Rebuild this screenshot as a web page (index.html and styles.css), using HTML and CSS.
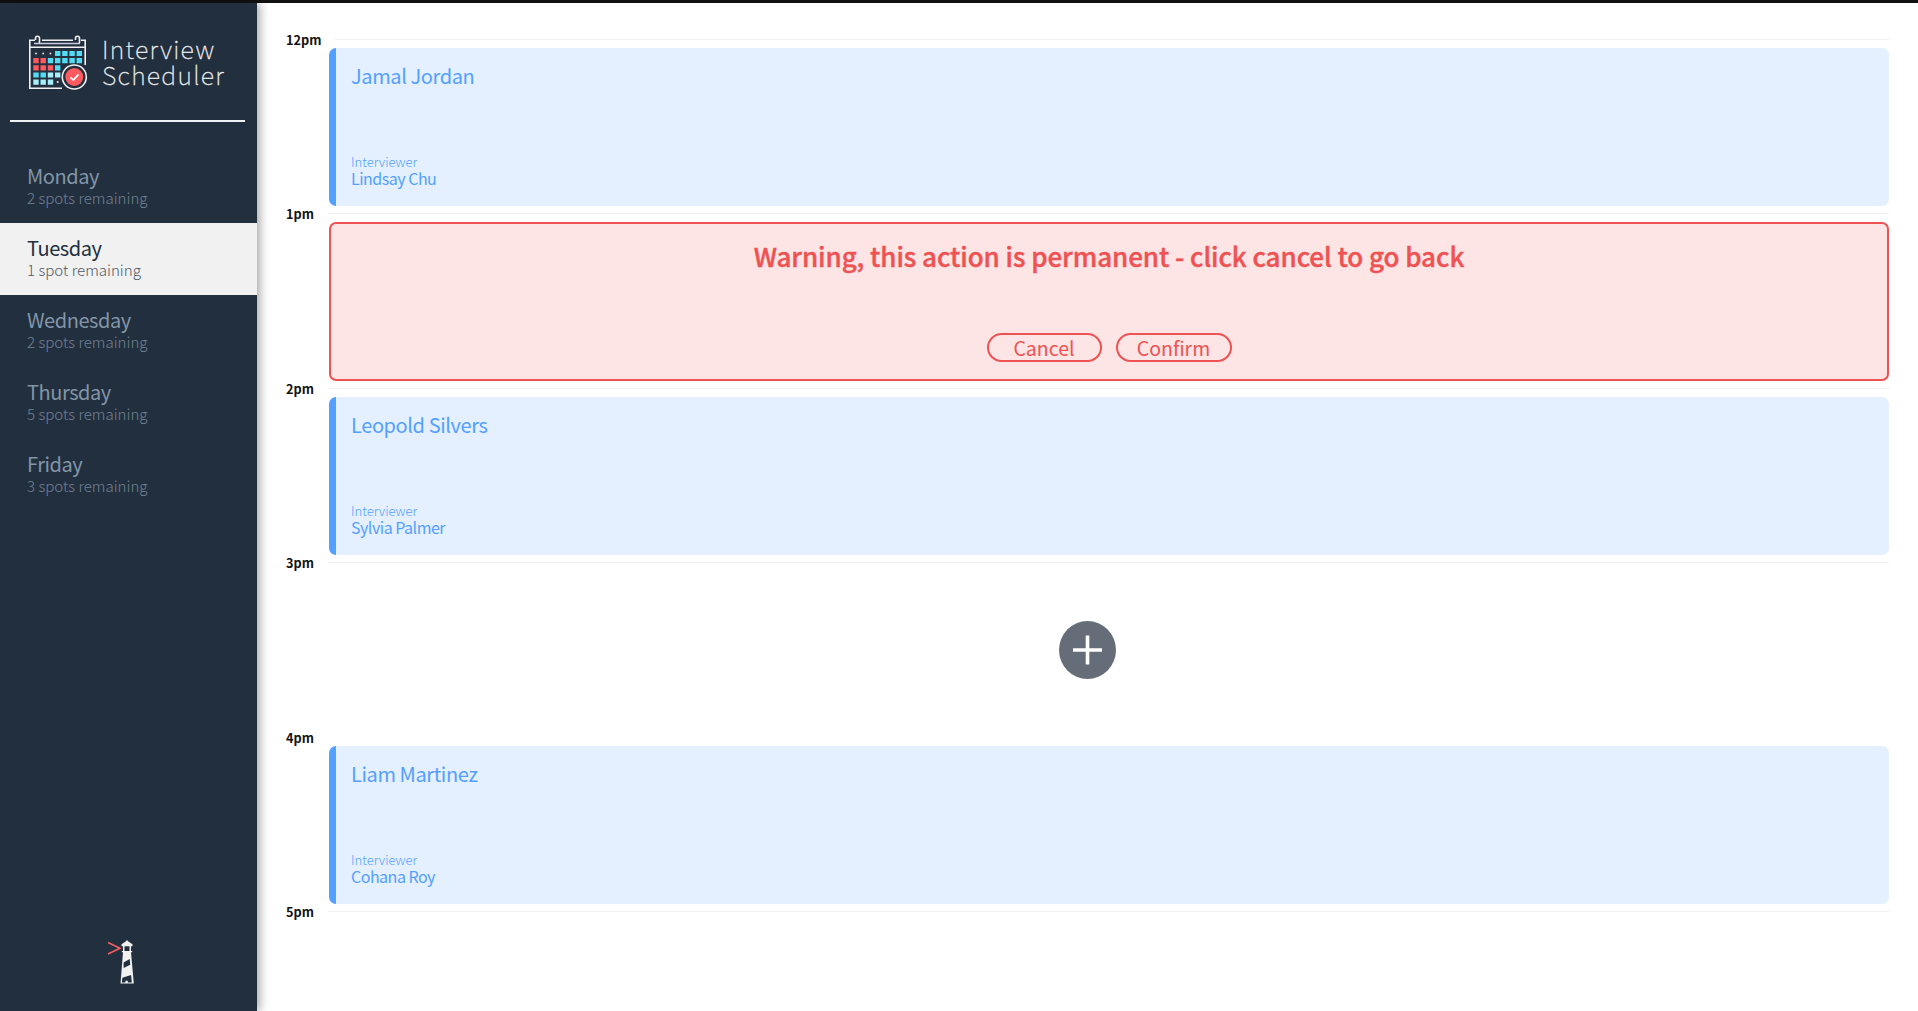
FILE: index.html
```html
<!DOCTYPE html>
<html lang="en">
<head>
<meta charset="utf-8">
<title>Interview Scheduler</title>
<link rel="stylesheet" href="styles.css">
</head>
<body>
<main class="layout">
  <section class="sidebar">
    <div class="logo">
      <svg class="logo-mark" width="60" height="56" viewBox="0 0 60 56">
        <g fill="none" stroke="#f1f1f1" stroke-width="1.6">
          <path d="M34 53.3H1.800V5.200H7M14 5.200h31M53 5.200h4.200V30"/>
          <path d="M1.800 12.300H57.200" stroke-width="1.400"/>
          <path d="M6 8.500H52" stroke="#c9cbe0"/>
          <path d="M7.500 5V3.200a2 2 0 0 1 4 0V8M47.500 5V3.200a2 2 0 0 1 4 0V8"/>
        </g>
        <g fill="#f1f1f1"><circle cx="8" cy="18.500" r=".9"/><circle cx="15.200" cy="18.500" r=".9"/><circle cx="22.400" cy="18.500" r=".9"/><circle cx="29.700" cy="47" r="1"/></g>
        <path fill="#53dbf4" d="M27 16h5.4v5H27zM34.2 16h5.4v5h-5.4zM41.4 16h5.4v5h-5.4zM48.6 16H54v5h-5.4zM19.8 23h5.4v5.2h-5.4zM27 23h5.4v5.2H27zM34.2 23h5.4v5.2h-5.4zM41.4 23h5.4v5.2h-5.4zM48.6 23H54v5.2h-5.4zM27 30.2h5.4v5.2H27zM5.3 37.4h5.4v5.2H5.3zM12.5 37.4h5.4v5.2h-5.4z"/>
        <path fill="#a6effa" d="M19.8 37.4h5.4v5.2h-5.4zM27 37.4h5.4v5.2H27zM5.3 44.6h5.4v5.2H5.3zM12.5 44.6h5.4v5.2h-5.4zM19.8 44.6h5.4v5.2h-5.4z"/>
        <path fill="#ff5a5f" d="M5.3 23h5.4v5.2H5.3zM12.5 23h5.4v5.2h-5.4zM5.3 30.2h5.4v5.2H5.3zM12.5 30.2h5.4v5.2h-5.4zM19.8 30.2h5.4v5.2h-5.4z"/>
        <circle cx="46.300" cy="42" r="12" fill="#222f3e" stroke="#f1f1f1" stroke-width="1.600"/>
        <circle cx="46.300" cy="42" r="9" fill="#ff5a5f"/>
        <path d="M42.500 42.300l2.800 2.700 5.300-5.600" fill="none" stroke="#fff" stroke-width="1.700"/>
      </svg>
      <div class="logo-text">Interview<br>Scheduler</div>
    </div>
    <hr class="separator">
    <nav>
      <ul class="days">
        <li class="day"><h2>Monday</h2><h3>2 spots remaining</h3></li>
        <li class="day day-selected"><h2>Tuesday</h2><h3>1 spot remaining</h3></li>
        <li class="day"><h2>Wednesday</h2><h3>2 spots remaining</h3></li>
        <li class="day"><h2>Thursday</h2><h3>5 spots remaining</h3></li>
        <li class="day"><h2>Friday</h2><h3>3 spots remaining</h3></li>
      </ul>
    </nav>
    <svg class="lighthouse" width="28" height="46" viewBox="0 0 28 46">
      <path d="M1 3.500L13 9.200 1 15" fill="none" stroke="#fa5f5f" stroke-width="1.500"/>
      <path fill="#f1f1f1" fill-rule="evenodd" d="M20 1l1 1.200 4.500 3v2H24V12h1.200v1.300H24L26.800 44.600H13.500L16 13.300H14.800V12H16V7.200H14.500v-2l4.500-3zM17.500 7.200V12h5V7.200zM16.600 23.500V29l6.600-3.300-.5-5.700zM15.300 38.700l-.4 4.700h3.500v-1.700h2.400v1.700h4l-.7-7.400V36z"/>
    </svg>
  </section>
  <section class="schedule">
    <div class="slot">
      <header class="hour"><h4>12pm</h4><hr></header>
      <article class="card show"><h2>Jamal Jordan</h2><div><h4>Interviewer</h4><h3>Lindsay Chu</h3></div></article>
    </div>
    <div class="slot">
      <header class="hour"><h4>1pm</h4><hr></header>
      <article class="card confirm">
        <h1>Warning, this action is permanent - click cancel to go back</h1>
        <div class="actions"><button>Cancel</button><button>Confirm</button></div>
      </article>
    </div>
    <div class="slot">
      <header class="hour"><h4>2pm</h4><hr></header>
      <article class="card show"><h2>Leopold Silvers</h2><div><h4>Interviewer</h4><h3>Sylvia Palmer</h3></div></article>
    </div>
    <div class="slot">
      <header class="hour"><h4>3pm</h4><hr></header>
      <div class="empty">
        <svg width="57" height="58" viewBox="0 0 57 58"><ellipse cx="28.500" cy="29" rx="28.500" ry="29" fill="#656d78"/><path d="M14 29H43M28.500 14.500V43.500" stroke="#fff" stroke-width="3.600"/></svg>
      </div>
    </div>
    <div class="slot">
      <header class="hour"><h4>4pm</h4></header>
      <article class="card show"><h2>Liam Martinez</h2><div><h4>Interviewer</h4><h3>Cohana Roy</h3></div></article>
    </div>
    <div class="slot slot-last">
      <header class="hour"><h4>5pm</h4><hr></header>
    </div>
  </section>
</main>
</body>
</html>
```
FILE: styles.css
```css
* { box-sizing: border-box; margin: 0; padding: 0; }

body {
  font-family: "Noto Sans CJK SC", "Noto Sans", sans-serif;
  background: #fff;
}

h1, h2, h3, h4 { font-weight: 400; }

.layout {
  display: flex;
  height: 1011px;
  border-top: 3px solid #111;
}

.sidebar {
  width: 257px;
  flex: none;
  display: flex;
  flex-direction: column;
  background: #222f3e;
  box-shadow: 2px 0 10px rgba(0, 0, 0, 0.4);
}

.logo {
  display: flex;
  gap: 14px;
  height: 117px;
  padding: 32px 0 0 28px;
}

.logo-mark { flex: none; }

.logo-text {
  color: #f1f1f1;
  font-size: 25px;
  font-weight: 100;
  line-height: 26px;
  letter-spacing: 1.3px;
  -webkit-text-stroke: 0.3px #f1f1f1;
}

.separator {
  border: 0;
  height: 2px;
  margin: 0 12px 29px 10px;
  background: #f1f1f1;
}

.days { list-style: none; }

.day {
  height: 72px;
  padding: 13px 0 0 27px;
  color: #8395a7;
}

.day h2 { font-size: 20px; line-height: 24px; letter-spacing: -0.45px; }
.day h3 { font-size: 15.1px; line-height: 18px; font-weight: 300; color: #728294; }
.day-selected { background: #f1f1f1; color: #222f3e; }
.day-selected h3 { color: #4e5967; }

.lighthouse { margin: auto 0 26px 107px; }

.schedule {
  flex: 1;
  padding: 29px 29px 0;
}

.slot { height: 174.4px; }
.slot-last { height: auto; }

.hour {
  display: flex;
  align-items: center;
  gap: 14px;
  height: 15px;
  margin-bottom: 1px;
}

.hour h4 {
  font-size: 12.7px;
  line-height: 15px;
  font-weight: 700;
  color: #111;
}

.hour hr { flex: 1; border: 0; height: 1px; background: #f1f1f1; }

.card {
  display: flex;
  flex-direction: column;
  justify-content: space-between;
  height: 158px;
  margin-left: 43px;
  border-radius: 7px;
}

.show {
  padding: 15px 15px 19px;
  border-left: 7px solid #54a0ff;
  background: #e4f0ff;
  color: #54a0ff;
}

.show h2 { font-size: 20px; line-height: 25px; letter-spacing: -0.4px; }
.show h4 { font-size: 13px; line-height: 15px; font-weight: 300; }
.show h3 { font-size: 16px; line-height: 18px; letter-spacing: -0.5px; }

.confirm {
  height: 159px;
  align-items: center;
  padding: 16px 0 17px;
  border: 2px solid #ee5253;
  background: #fde5e5;
  color: #ee5253;
}

.confirm h1 {
  font-size: 26px;
  line-height: 31px;
  font-weight: 500;
  letter-spacing: -0.065px;
  -webkit-text-stroke: 0.4px #ee5253;
}

.actions { display: flex; gap: 14px; }

.actions button {
  width: 115px;
  height: 29px;
  border: 2px solid #ee5253;
  border-radius: 15px;
  background: none;
  color: #ee5253;
  font: 19.5px/25px "Noto Sans CJK SC", "Noto Sans", sans-serif;
}

.actions button + button { width: 116px; }

.empty {
  height: 158px;
  display: flex;
  align-items: center;
  justify-content: center;
}
```
